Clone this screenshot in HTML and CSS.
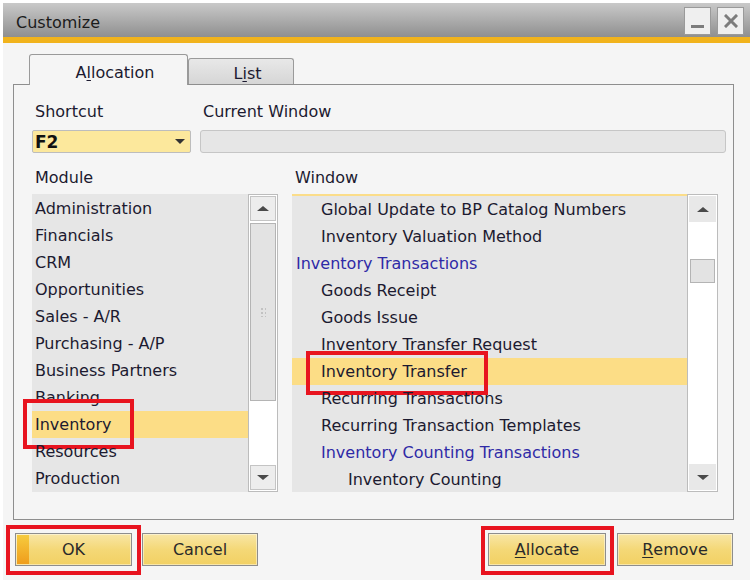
FILE: index.html
```html
<!DOCTYPE html>
<html>
<head>
<meta charset="utf-8">
<link rel="stylesheet" href="styles.css">
</head>
<body>
<div class="window">
  <div class="titlebar">
    <span class="title">Customize</span>
    <div class="tb-btns">
      <span class="tb-btn"><span class="min-bar"></span></span>
      <span class="tb-btn">
        <svg width="14" height="14" viewBox="0 0 14 14"><path d="M2 2L12 12M12 2L2 12" stroke="#7c7c7c" stroke-width="3" stroke-linecap="square"/></svg>
      </span>
    </div>
  </div>
  <div class="stripe"></div>
  <div class="body">
    <div class="tabs">
      <div class="tab active">A<u>l</u>location</div>
      <div class="tab">L<u>i</u>st</div>
    </div>
    <div class="panel">
      <div class="row-labels">
        <div class="col-short"><span class="label">Shortcut</span></div>
        <div class="col-cur"><span class="label">Current Window</span></div>
      </div>
      <div class="row-inputs">
        <div class="combo col-short"><span class="combo-val">F2</span><span class="combo-arrow"></span></div>
        <div class="textbox col-cur"></div>
      </div>
      <div class="row-labels2">
        <div class="col-mod"><span class="label">Module</span></div>
        <div class="col-win"><span class="label">Window</span></div>
      </div>
      <div class="row-lists">
        <div class="list col-mod">
          <div class="items">
            <div class="item">Administration</div>
            <div class="item">Financials</div>
            <div class="item">CRM</div>
            <div class="item">Opportunities</div>
            <div class="item">Sales - A/R</div>
            <div class="item">Purchasing - A/P</div>
            <div class="item">Business Partners</div>
            <div class="item">Banking</div>
            <div class="item sel annot annot-inv">Inventory</div>
            <div class="item">Resources</div>
            <div class="item">Production</div>
          </div>
          <div class="sbar sbar-mod">
            <div class="sbtn up"><span class="tri-up"></span></div>
            <div class="thumb big"><span class="grip"></span></div>
            <div class="track"></div>
            <div class="sbtn down"><span class="tri-down"></span></div>
          </div>
        </div>
        <div class="list col-win">
          <div class="items items-win">
            <div class="item l1">Global Update to BP Catalog Numbers</div>
            <div class="item l1">Inventory Valuation Method</div>
            <div class="item l0 head">Inventory Transactions</div>
            <div class="item l1">Goods Receipt</div>
            <div class="item l1">Goods Issue</div>
            <div class="item l1">Inventory Transfer Request</div>
            <div class="item l1 sel annot annot-tr">Inventory Transfer</div>
            <div class="item l1">Recurring Transactions</div>
            <div class="item l1">Recurring Transaction Templates</div>
            <div class="item l1 head">Inventory Counting Transactions</div>
            <div class="item l2">Inventory Counting</div>
          </div>
          <div class="sbar sbar-win">
            <div class="sbtn flat up"><span class="tri-up"></span></div>
            <div class="track t1"></div>
            <div class="thumb small"></div>
            <div class="track"></div>
            <div class="sbtn flat down"><span class="tri-down"></span></div>
          </div>
        </div>
      </div>
    </div>
    <div class="footer">
      <div class="btn-group">
        <div class="btn ok annot annot-ok"><span class="ok-accent"></span>OK</div>
        <div class="btn">Cancel</div>
      </div>
      <div class="btn-group right">
        <div class="btn al annot annot-al"><u>A</u>llocate</div>
        <div class="btn"><u>R</u>emove</div>
      </div>
    </div>
  </div>
</div>
</body>
</html>
```
FILE: styles.css
```css
*, *::before, *::after { box-sizing: border-box; }
html, body { margin: 0; padding: 0; background: #ffffff; }
body {
  font-family: "DejaVu Sans", "Noto Sans", sans-serif;
  font-size: 16px;
  color: #1c1a30;
}
.window {
  margin: 3px 0 0 3px;
  width: 747px;
  height: 577px;
  background: #f5f5f5;
  display: flex;
  flex-direction: column;
}
.titlebar {
  height: 34px;
  background: linear-gradient(#c9c9c9, #8f8f8f);
  display: flex;
  align-items: center;
  justify-content: space-between;
  padding: 0 6px 0 13px;
}
.title { font-size: 16px; color: #1b1b1b; margin-top: 4px; }
.tb-btns { display: flex; gap: 6px; align-items: center; margin-top: 1px; }
.tb-btn {
  width: 27px; height: 28px;
  background: #efefef;
  border: 1px solid #9a9a9a;
  display: flex; align-items: center; justify-content: center;
  position: relative;
}
.min-bar {
  position: absolute; left: 6px; right: 6px; bottom: 6px; height: 3px; background: #7c7c7c;
}
.stripe { height: 6px; background: #f1b31c; }
.body { flex: 1; padding: 0 0 0 10px; display: flex; flex-direction: column; }
.tabs {
  height: 41px;
  display: flex;
  align-items: flex-end;
  padding-left: 16px;
  position: relative;
  z-index: 2;
}
.tab {
  border: 1px solid #9a9a9a;
  border-bottom: none;
  border-radius: 3px 3px 0 0;
  display: flex; align-items: center; justify-content: center;
  font-size: 16px;
  padding-left: 13px;
}
.tab.active {
  width: 159px; height: 31px; margin-bottom: -1px;
  background: #f5f5f5;
  padding-top: 5px;
}
.tab:not(.active) {
  width: 106px; height: 26px;
  background: linear-gradient(#e8e8e8, #d6d6d6);
  padding-top: 4px;
}
.tab u, .btn u { text-decoration: underline; text-underline-offset: 2px; }
.panel {
  width: 721px;
  height: 436px;
  border: 1px solid #8e8e8e;
  padding: 0 0 0 18px;
  display: flex;
  flex-direction: column;
}
.label { padding-left: 3px; line-height: 20px; }
.row-labels { display: flex; gap: 9px; margin-top: 17px; height: 20px; }
.row-inputs { display: flex; gap: 9px; margin-top: 8px; height: 23px; }
.row-labels2 { display: flex; gap: 14px; margin-top: 15px; height: 20px; }
.row-lists { display: flex; gap: 14px; margin-top: 6px; height: 298px; }
.col-short { width: 159px; }
.col-cur { width: 526px; }
.col-mod { width: 246px; }
.col-win { width: 426px; }
.combo {
  background: #fce89c;
  border: 1px solid #bdbdbd;
  border-radius: 2px;
  display: flex; align-items: center; justify-content: space-between;
  padding: 0 4px 0 2px;
}
.combo-val { font-weight: bold; font-size: 17px; color: #111; }
.combo-arrow {
  width: 0; height: 0;
  border-left: 5px solid transparent; border-right: 5px solid transparent;
  border-top: 5px solid #333;
  margin-right: 1px;
}
.textbox {
  background: #e6e6e6;
  border: 1px solid #c6c6c6;
  border-radius: 3px;
}
.list { display: flex; background: #e6e6e6; }
.items { flex: 1; padding-top: 1px; }
.items-win { border-top: 2px solid #fbdd8a; padding-top: 0; }
.item { height: 27px; line-height: 27px; padding-left: 3px; white-space: nowrap; position: relative; }
.item.sel { background: #fcdd86; }
.item.l0 { padding-left: 4px; }
.item.l1 { padding-left: 29px; }
.item.l2 { padding-left: 56px; }
.item.head { color: #2f2aa6; }
.sbar {
  border: 1px solid #bcbcbc;
  background: #ffffff;
  display: flex; flex-direction: column;
  padding: 1px;
}
.sbar-mod { width: 30px; }
.sbar-win { width: 31px; }
.sbtn {
  height: 25px;
  background: #ededed;
  border: 1px solid #c4c4c4;
  display: flex; align-items: center; justify-content: center;
}
.sbtn.flat { border: none; background: #e8e8e8; height: 26px; }
.tri-up, .tri-down {
  width: 0; height: 0;
  border-left: 6px solid transparent; border-right: 6px solid transparent;
}
.tri-up { border-bottom: 5px solid #4a4a4a; }
.tri-down { border-top: 5px solid #4a4a4a; }
.thumb {
  background: #e3e3e3;
  border: 1px solid #b4b4b4;
  display: flex; align-items: center; justify-content: center;
}
.thumb.big { height: 178px; margin-top: 2px; }
.thumb.small { height: 24px; margin: 0 1px; }
.track { flex: 1; }
.track.t1 { flex: 0 0 37px; }
.grip {
  width: 6px; height: 10px;
  background-image: radial-gradient(circle, #c2c2c2 1px, transparent 1.2px);
  background-size: 4px 4px;
}
.footer {
  display: flex; justify-content: space-between;
  padding-left: 2px; margin-top: 13px;
  width: 720px;
}
.btn-group { display: flex; gap: 10px; }
.btn-group.right { gap: 11px; }
.btn {
  width: 116px; height: 33px;
  border: 1px solid #8d8d8d;
  background: linear-gradient(#f8e6a6, #f4d877 50%, #f2d063);
  box-shadow: inset 0 0 0 1px rgba(255,255,255,0.45);
  display: flex; align-items: center; justify-content: center;
  font-size: 16px;
  color: #2a2a2a;
  position: relative;
}
.btn.ok { width: 117px; }
.btn.al { width: 118px; }
.ok-accent {
  position: absolute; left: 1px; top: 1px; bottom: 1px; width: 12px;
  background: linear-gradient(#f6cb3e, #ef9d1c);
}
.annot::after {
  content: "";
  position: absolute;
  border: 4px solid #e8141f;
  pointer-events: none;
}
.annot-ok::after { left: -10px; right: -10px; top: -9px; bottom: -10px; }
.annot-al::after { left: -8px; right: -9px; top: -8px; bottom: -10px; }
.annot-inv::after { left: -9px; width: 111px; top: -12px; height: 50px; }
.annot-tr::after { left: 14px; width: 182px; top: -7px; height: 44px; }
```
